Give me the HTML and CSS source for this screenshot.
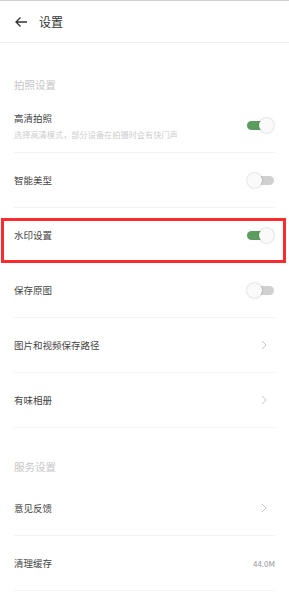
FILE: index.html
```html
<!DOCTYPE html>
<html>
<head>
    <title>设置</title>
    <link rel="stylesheet" href="styles.css">
</head>
<body>
    <div class="top-bar">
        <svg class="back-icon" width="14" height="12" viewBox="0 0 14 12">
            <path d="M13 6H2M6.5 1.5L2 6l4.5 4.5" fill="none" stroke="#333" stroke-width="1.3"/>
        </svg>
        <span class="top-title">设置</span>
    </div>

    <div class="group-title first">拍照设置</div>
    <div class="setting-row">
        <div class="setting-text">
            <div class="setting-name">高清拍照</div>
            <div class="setting-desc">选择高清模式，部分设备在拍摄时会有快门声</div>
        </div>
        <span class="switch on"></span>
    </div>
    <div class="setting-row">
        <div class="setting-name">智能美型</div>
        <span class="switch"></span>
    </div>
    <div class="setting-row marked">
        <div class="setting-name">水印设置</div>
        <span class="switch on"></span>
    </div>
    <div class="setting-row">
        <div class="setting-name">保存原图</div>
        <span class="switch"></span>
    </div>
    <div class="setting-row">
        <div class="setting-name">图片和视频保存路径</div>
        <svg class="chevron" width="6" height="10" viewBox="0 0 6 10"><path d="M1 1l4 4-4 4" fill="none" stroke="#c8c8c8" stroke-width="1"/></svg>
    </div>
    <div class="setting-row">
        <div class="setting-name">有味相册</div>
        <svg class="chevron" width="6" height="10" viewBox="0 0 6 10"><path d="M1 1l4 4-4 4" fill="none" stroke="#c8c8c8" stroke-width="1"/></svg>
    </div>

    <div class="group-title">服务设置</div>
    <div class="setting-row">
        <div class="setting-name">意见反馈</div>
        <svg class="chevron" width="6" height="10" viewBox="0 0 6 10"><path d="M1 1l4 4-4 4" fill="none" stroke="#c8c8c8" stroke-width="1"/></svg>
    </div>
    <div class="setting-row">
        <div class="setting-name">清理缓存</div>
        <span class="setting-value">44.0M</span>
    </div>
</body>
</html>
```

FILE: styles.css
```css
body {
    font-family: "Noto Sans CJK SC", "Noto Sans", sans-serif;
    margin: 0;
    padding: 0;
    background: #fff;
    border-top: 1px solid #cfcfcf;
    color: #444;
}

.top-bar {
    height: 41px;
    display: flex;
    align-items: center;
    padding: 0 14px;
    border-bottom: 1px solid #f0f0f0;
}

.back-icon {
    margin-right: 11px;
}

.top-title {
    font-size: 12px;
    color: #333;
}

.group-title {
    padding: 31px 14px 6px;
    font-size: 10.5px;
    line-height: 16px;
    color: #c6c6c6;
}

.group-title.first {
    padding-top: 34px;
    padding-bottom: 5px;
}

.setting-row {
    position: relative;
    height: 54px;
    margin: 0 14px;
    border-bottom: 1px solid #f3f3f3;
    display: flex;
    align-items: center;
    justify-content: space-between;
}

.setting-name {
    font-size: 9.5px;
    line-height: 14px;
    color: #444;
}

.setting-desc {
    margin-top: 3px;
    font-size: 8.2px;
    line-height: 12px;
    color: #cdcdcd;
}

.setting-value {
    font-size: 8px;
    color: #999;
}

.chevron {
    margin-right: 8px;
}

.switch {
    position: relative;
    width: 26px;
    height: 9px;
    border-radius: 5px;
    background: #d0d0d0;
    margin-right: 1px;
}

.switch::after {
    content: "";
    position: absolute;
    top: -3px;
    left: -1px;
    width: 15px;
    height: 15px;
    border-radius: 50%;
    background: #fafafa;
    box-shadow: 0 0 2px rgba(0, 0, 0, 0.3);
}

.switch.on {
    background: #5c9d5f;
    margin-right: 2px;
}

.switch.on::after {
    left: auto;
    right: -1px;
}

/* red highlight drawn over the watermark row */
.marked::after {
    content: "";
    position: absolute;
    left: -13px;
    right: -11px;
    top: 10px;
    bottom: -1px;
    border: 3px solid #fa2a2f;
    pointer-events: none;
}
```
